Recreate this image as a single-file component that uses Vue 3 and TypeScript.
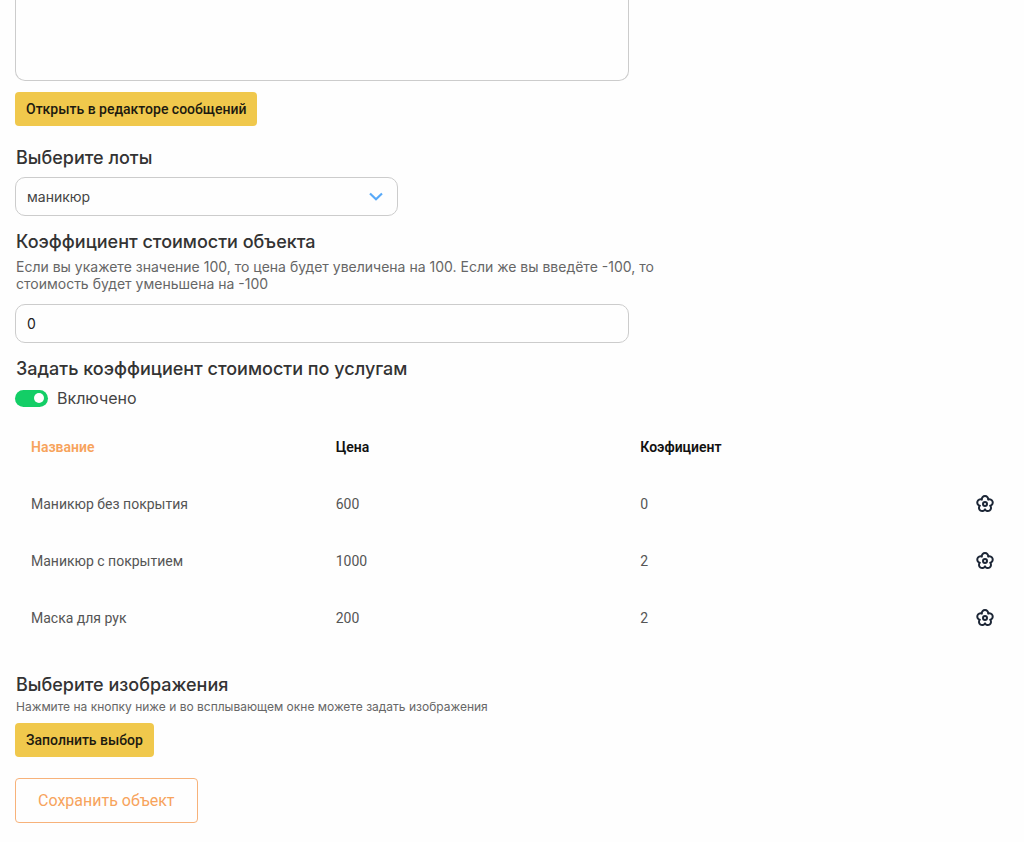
<script setup lang="ts">
import { ref } from 'vue'

interface Service {
  name: string
  price: number
  ratio: number
}

const message = ref('')
const lot = ref('маникюр')
const ratio = ref('0')
const byService = ref(true)
const services: Service[] = [
  { name: 'Маникюр без покрытия', price: 600, ratio: 0 },
  { name: 'Маникюр с покрытием', price: 1000, ratio: 2 },
  { name: 'Маска для рук', price: 200, ratio: 2 },
]
</script>

<template>
  <form class="page" @submit.prevent>
    <textarea v-model="message" class="message" aria-label="Сообщение"></textarea>
    <button type="button" class="btn">Открыть в редакторе сообщений</button>

    <label class="title lots-title" for="lots">Выберите лоты</label>
    <div class="select">
      <select id="lots" v-model="lot">
        <option>маникюр</option>
      </select>
      <svg class="chevron" viewBox="0 0 14 10" width="14" height="10" aria-hidden="true">
        <path d="M1 1.5 L7 7.2 L13 1.5" fill="none" stroke="#58a9f8" stroke-width="2.2" />
      </svg>
    </div>

    <label class="title ratio-title" for="ratio">Коэффициент стоимости объекта</label>
    <p class="hint">
      Если вы укажете значение 100, то цена будет увеличена на 100. Если же вы введёте -100, то
      стоимость будет уменьшена на -100
    </p>
    <input id="ratio" v-model="ratio" class="field" type="text" inputmode="numeric" />

    <h2 class="title service-title">Задать коэффициент стоимости по услугам</h2>
    <label class="toggle">
      <input v-model="byService" type="checkbox" />
      <span>Включено</span>
    </label>

    <table class="table">
      <thead>
        <tr>
          <th class="active">Название</th>
          <th>Цена</th>
          <th>Коэфициент</th>
          <th class="action"></th>
        </tr>
      </thead>
      <tbody>
        <tr v-for="s in services" :key="s.name">
          <td>{{ s.name }}</td>
          <td>{{ s.price }}</td>
          <td>{{ s.ratio }}</td>
          <td class="action">
            <button type="button" class="gear" :aria-label="'Настроить: ' + s.name">
              <svg viewBox="0 0 20 20" width="20" height="20" fill="none" stroke="#1c2636" stroke-width="2" stroke-linejoin="round">
                <path d="M6.83 5.63 A3.2 3.2 0 1 1 13.17 5.63 A3.2 3.2 0 1 1 15.14 11.67 A3.2 3.2 0 1 1 10 15.4 A3.2 3.2 0 1 1 4.86 11.67 A3.2 3.2 0 1 1 6.83 5.63 Z" />
                <circle cx="10" cy="10" r="2" />
              </svg>
            </button>
          </td>
        </tr>
      </tbody>
    </table>

    <h2 class="title images-title">Выберите изображения</h2>
    <p class="note">Нажмите на кнопку ниже и во всплывающем окне можете задать изображения</p>
    <button type="button" class="btn">Заполнить выбор</button>
    <button type="submit" class="save">Сохранить объект</button>
  </form>
</template>

<style>
body {
  margin: 0;
  background: #fefefe;
}
</style>

<style scoped>
.page {
  display: flex;
  flex-direction: column;
  align-items: flex-start;
  padding: 0 15px 18px;
  font-family: Inter, "Liberation Sans", sans-serif;
  color: #333;
}
.page *,
.page {
  box-sizing: border-box;
}
.message,
.field {
  width: 100%;
  max-width: 614px;
  border: 1px solid #ccc;
  border-radius: 10px;
  background: #fefefe;
  font: 400 14px/20px Inter, sans-serif;
  color: #222;
}
.message {
  height: 81px;
  margin: 0 0 11px;
  padding: 10px;
  border-top: 0;
  border-radius: 0 0 10px 10px;
  resize: none;
}
.field {
  height: 39px;
  margin: 12px 0 0;
  padding: 0 11px;
}
.btn {
  height: 34px;
  padding: 0 11px;
  border: 0;
  border-radius: 4px;
  background: #f0c84c;
  font: 500 14px/20px Roboto, sans-serif;
  color: #1c1a10;
}
.title {
  margin: 0;
  padding-left: 1px;
  font-size: 18px;
  font-weight: 500;
  line-height: 22px;
}
.lots-title {
  margin-top: 21px;
}
.select {
  position: relative;
  width: 100%;
  max-width: 383px;
  margin-top: 8px;
}
.select select {
  display: block;
  width: 100%;
  height: 39px;
  padding: 0 11px;
  border: 1px solid #ccc;
  border-radius: 10px;
  appearance: none;
  background: #fefefe;
  font: 400 14px/20px Inter, sans-serif;
  color: #444;
}
.chevron {
  position: absolute;
  right: 15px;
  top: 15px;
  pointer-events: none;
}
.ratio-title {
  margin-top: 15px;
}
.hint {
  max-width: 660px;
  margin: 5px 0 0;
  padding-left: 1px;
  font-size: 14px;
  line-height: 17px;
  color: #666;
}
.service-title {
  margin-top: 15px;
}
.toggle {
  display: flex;
  align-items: center;
  gap: 9px;
  margin-top: 8px;
  font-size: 16px;
  line-height: 20px;
  color: #444;
}
.toggle input {
  display: flex;
  align-items: center;
  width: 33px;
  height: 17px;
  margin: 0;
  padding: 0 4px;
  border-radius: 9px;
  appearance: none;
  background: #bbb;
}
.toggle input::before {
  content: "";
  width: 10px;
  height: 10px;
  border-radius: 50%;
  background: #fff;
}
.toggle input:checked {
  justify-content: flex-end;
  background: #13ce66;
}
.table {
  width: 100%;
  margin-top: 10px;
  border-collapse: collapse;
  table-layout: fixed;
  font-family: Roboto, sans-serif;
  font-size: 14px;
  line-height: 20px;
}
.table th,
.table td {
  height: 57px;
  padding: 0 16px;
  text-align: left;
  vertical-align: middle;
}
.table th {
  font-weight: 600;
  color: #111;
}
.table th.active {
  color: #f7a35c;
}
.table td {
  font-weight: 400;
  color: #555;
}
.table .action {
  width: 80px;
  padding: 0 14px;
}
.gear {
  display: block;
  margin-left: auto;
  padding: 0;
  border: 0;
  background: none;
}
.gear svg {
  display: block;
}
.images-title {
  margin-top: 28px;
}
.note {
  margin: 3px 0 8px;
  padding-left: 1px;
  font-size: 12px;
  line-height: 16px;
  color: #666;
}
.save {
  height: 45px;
  margin-top: 21px;
  padding: 0 22px;
  border: 1px solid #f7b27a;
  border-radius: 4px;
  background: #fefefe;
  font: 400 16px/20px Roboto, sans-serif;
  color: #f7a35c;
}
</style>
